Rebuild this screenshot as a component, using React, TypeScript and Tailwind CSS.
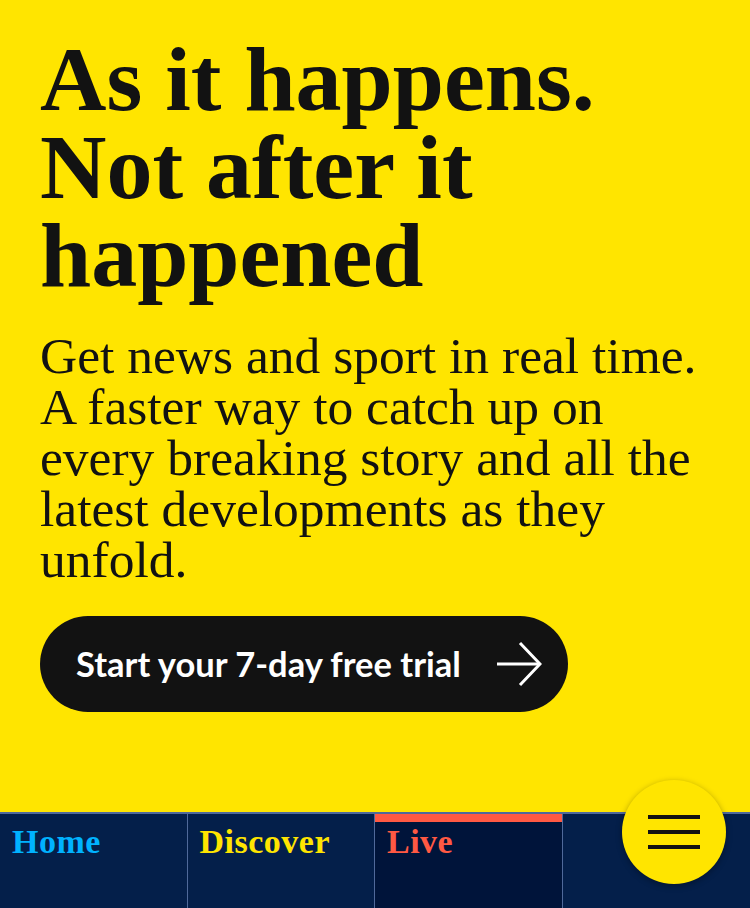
import React from "react";

const serif = { fontFamily: '"Liberation Serif", "Times New Roman", serif' } as const;

export default function App() {
  return (
    <div className="relative flex h-[908px] w-[750px] flex-col overflow-hidden bg-[#ffe500]">
      <main className="flex h-[812px] flex-col px-[40px] pt-[35px]">
        <h1
          className="text-[92px] font-bold leading-[88px] tracking-[0px] text-[#121212]"
          style={serif}
        >
          <span className="block whitespace-nowrap">As it happens.</span>
          <span className="block whitespace-nowrap">Not after it</span>
          <span className="block whitespace-nowrap">happened</span>
        </h1>
        <p
          className="mt-[31px] text-[51.5px] font-normal leading-[51px] text-[#121212]"
          style={serif}
        >
          <span className="block whitespace-nowrap">Get news and sport in real time.</span>
          <span className="block whitespace-nowrap">A faster way to catch up on</span>
          <span className="block whitespace-nowrap">every breaking story and all the</span>
          <span className="block whitespace-nowrap">latest developments as they</span>
          <span className="block whitespace-nowrap">unfold.</span>
        </p>
        <button
          className="mt-[31px] flex h-[96px] w-[528px] items-center justify-between rounded-full bg-[#121212] pl-[36px] pr-[26px] text-white"
        >
          <span
            className="whitespace-nowrap text-[34.5px] font-bold"
            style={{ fontFamily: 'Lato, "Open Sans", sans-serif' }}
          >
            Start your 7-day free trial
          </span>
          <svg width="46" height="46" viewBox="0 0 46 46" fill="none" stroke="white" strokeWidth="3">
            <path d="M1 23 H43" />
            <path d="M24 2 L44 23 L24 44" />
          </svg>
        </button>
      </main>
      <nav className="grid h-[96px] grid-cols-4 border-t-[2px] border-[#50699a] bg-[#041f4a]">
        <div className="border-r border-[#50699a] pl-[12px] pt-[11px]">
          <span className="text-[34px] font-bold leading-[34px] tracking-[0.5px] text-[#00b2ff]" style={serif}>
            Home
          </span>
        </div>
        <div className="border-r border-[#50699a] pl-[12px] pt-[11px]">
          <span className="text-[34px] font-bold leading-[34px] tracking-[0.5px] text-[#ffe500]" style={serif}>
            Discover
          </span>
        </div>
        <div className="border-r border-[#50699a] bg-[#00143a]">
          <div className="h-[8px] bg-[#ff5943]" />
          <div className="pl-[12px] pt-[3px]">
            <span className="text-[34px] font-bold leading-[34px] tracking-[0.5px] text-[#ff5943]" style={serif}>
              Live
            </span>
          </div>
        </div>
        <div />
      </nav>
      <button className="absolute left-[622px] top-[780px] flex h-[104px] w-[104px] flex-col items-center justify-center gap-[11px] rounded-full bg-[#ffe500] shadow-[0_2px_6px_rgba(0,0,0,0.35)]">
        <span className="block h-[4px] w-[52px] bg-[#121212]" />
        <span className="block h-[4px] w-[52px] bg-[#121212]" />
        <span className="block h-[4px] w-[52px] bg-[#121212]" />
      </button>
    </div>
  );
}
